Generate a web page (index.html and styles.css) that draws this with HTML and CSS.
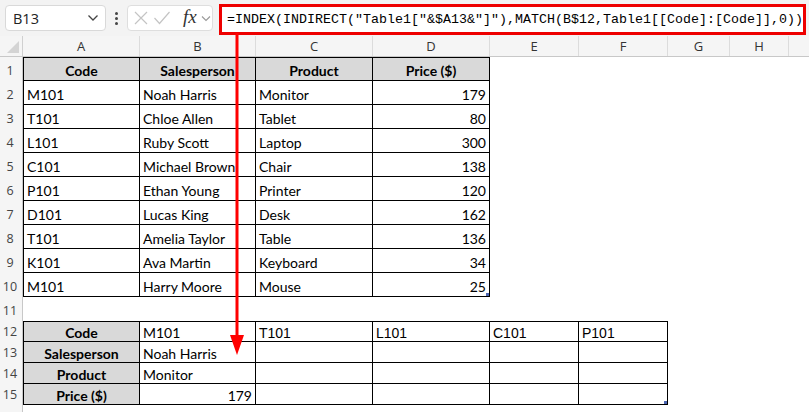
FILE: index.html
```html
<!DOCTYPE html>
<html>
<head>
<meta charset="utf-8">
<link rel="stylesheet" href="styles.css">
</head>
<body>
<div class="app">
  <div class="toolbar">
    <div class="namebox">
      <span class="nb-text">B13</span>
      <svg class="chev" width="12" height="8" viewBox="0 0 12 8"><path d="M1.5 1.5 L6 6 L10.5 1.5" fill="none" stroke="#444" stroke-width="1.3"/></svg>
    </div>
    <div class="dots"><span></span><span></span><span></span></div>
    <div class="fxbox">
      <svg width="16" height="16" viewBox="0 0 16 16"><path d="M2 2 L14 14 M14 2 L2 14" stroke="#c4c4c4" stroke-width="1.2" fill="none"/></svg>
      <svg width="18" height="16" viewBox="0 0 18 16"><path d="M1.5 8 L6.5 13.5 L16.5 2" stroke="#c4c4c4" stroke-width="1.2" fill="none"/></svg>
      <span class="fx">fx</span>
      <svg width="10" height="7" viewBox="0 0 10 7"><path d="M1 1.5 L5 5.5 L9 1.5" fill="none" stroke="#999" stroke-width="1.1"/></svg>
    </div>
    <div class="formula">=INDEX(INDIRECT("Table1["&amp;$A13&amp;"]"),MATCH(B$12,Table1[[Code]:[Code]],0))</div>
  </div>

  <div class="sheet">
    <div class="row colhead">
      <div class="corner"><span class="tri"></span></div>
      <div class="ch">A</div><div class="ch">B</div><div class="ch">C</div><div class="ch">D</div>
      <div class="ch">E</div><div class="ch">F</div><div class="ch">G</div><div class="ch">H</div><div class="ch last"></div>
    </div>

    <div class="row r24">
      <div class="rh">1</div>
      <div class="c b l t hd">Code</div><div class="c b t hd">Salesperson</div><div class="c b t hd">Product</div><div class="c b t hd">Price ($)</div>
    </div>
    <div class="row r24"><div class="rh">2</div><div class="c b l">M101</div><div class="c b">Noah Harris</div><div class="c b">Monitor</div><div class="c b num">179</div></div>
    <div class="row r24"><div class="rh">3</div><div class="c b l">T101</div><div class="c b">Chloe Allen</div><div class="c b">Tablet</div><div class="c b num">80</div></div>
    <div class="row r24"><div class="rh">4</div><div class="c b l">L101</div><div class="c b">Ruby Scott</div><div class="c b">Laptop</div><div class="c b num">300</div></div>
    <div class="row r24"><div class="rh">5</div><div class="c b l">C101</div><div class="c b">Michael Brown</div><div class="c b">Chair</div><div class="c b num">138</div></div>
    <div class="row r24"><div class="rh">6</div><div class="c b l">P101</div><div class="c b">Ethan Young</div><div class="c b">Printer</div><div class="c b num">120</div></div>
    <div class="row r24"><div class="rh">7</div><div class="c b l">D101</div><div class="c b">Lucas King</div><div class="c b">Desk</div><div class="c b num">162</div></div>
    <div class="row r24"><div class="rh">8</div><div class="c b l">T101</div><div class="c b">Amelia Taylor</div><div class="c b">Table</div><div class="c b num">136</div></div>
    <div class="row r24"><div class="rh">9</div><div class="c b l">K101</div><div class="c b">Ava Martin</div><div class="c b">Keyboard</div><div class="c b num">34</div></div>
    <div class="row r24"><div class="rh">10</div><div class="c b l">M101</div><div class="c b">Harry Moore</div><div class="c b">Mouse</div><div class="c b num handle">25</div></div>
    <div class="row r24"><div class="rh">11</div></div>

    <div class="row r21">
      <div class="rh">12</div>
      <div class="c b l t hd">Code</div><div class="c b t">M101</div><div class="c b t alt">T101</div><div class="c b t alt">L101</div><div class="c b t alt">C101</div><div class="c b t alt">P101</div>
    </div>
    <div class="row r21"><div class="rh">13</div><div class="c b l hd">Salesperson</div><div class="c b">Noah Harris</div><div class="c b"></div><div class="c b"></div><div class="c b"></div><div class="c b"></div></div>
    <div class="row r21"><div class="rh">14</div><div class="c b l hd">Product</div><div class="c b">Monitor</div><div class="c b"></div><div class="c b"></div><div class="c b"></div><div class="c b"></div></div>
    <div class="row r21"><div class="rh">15</div><div class="c b l hd">Price ($)</div><div class="c b num">179</div><div class="c b"></div><div class="c b"></div><div class="c b"></div><div class="c b handle"></div></div>
    <div class="row rest"><div class="rh"></div></div>
  </div>

  <svg class="arrow" width="14" height="325" viewBox="0 0 14 325">
    <rect x="5.5" y="0" width="3" height="306" fill="#f00"/>
    <polygon points="0,302 14,302 7,322" fill="#f00"/>
  </svg>
</div>
</body>
</html>
```

FILE: styles.css
```css
* { box-sizing: border-box; }
html, body { margin: 0; padding: 0; background: #fff; }
body { width: 809px; height: 412px; overflow: hidden; font-family: "Lato", "Open Sans", sans-serif; }
.app { position: relative; width: 809px; height: 412px; }

.toolbar {
  height: 36px;
  background: #f3f3f3;
  display: flex;
  align-items: center;
  padding-left: 5px;
}
.namebox {
  width: 101px; height: 26px;
  background: #fff;
  border: 1px solid #d9d9d9;
  border-radius: 4px;
  display: flex; align-items: center; justify-content: space-between;
  padding: 0 6px 0 7px;
  font-family: "Open Sans", sans-serif;
  font-size: 14.5px; color: #222;
}
.dots {
  width: 21px; height: 26px;
  display: flex; flex-direction: column; align-items: center; justify-content: center; gap: 2px;
}
.dots span { width: 3px; height: 3px; background: #444; border-radius: 50%; }
.fxbox {
  width: 86px; height: 26px;
  background: #fff;
  border: 1px solid #dedede;
  border-radius: 4px;
  display: flex; align-items: center; gap: 4px;
  padding-left: 5px;
}
.fx {
  font-family: "Liberation Serif", serif;
  font-style: italic;
  font-size: 19px;
  color: #333;
  margin-left: 8px;
  margin-top: -2px;
}
.formula {
  margin-left: 6px;
  margin-top: 2px;
  width: 587px; height: 31px;
  border: 3px solid #ee0000;
  background: #fff;
  font-family: "Liberation Mono", "DejaVu Sans Mono", monospace;
  font-size: 13.3px;
  color: #000;
  display: flex; align-items: center;
  padding-left: 5px;
  white-space: nowrap;
  letter-spacing: 0.02px;
}

.sheet { display: flex; flex-direction: column; }
.row {
  display: grid;
  grid-template-columns: 23px 117px 116px 117px 117px 89px 89px 62px 59px 20px;
}
.colhead { height: 21px; background: #f5f5f5; border-bottom: 1px solid #c8c8c8; }
.corner { position: relative; border-right: 1px solid #d0d0d0; }
.tri {
  position: absolute; right: 3px; bottom: 3px;
  width: 0; height: 0;
  border-left: 12px solid transparent;
  border-bottom: 12px solid #d4d4d4;
}
.ch {
  display: flex; align-items: center; justify-content: center;
  font-family: "Open Sans", sans-serif; font-size: 13px; color: #333;
  border-right: 1px solid #dcdcdc;
}
.ch.last { border-right: none; }

.r24 { height: 24px; }
.r21 { height: 21px; }
.rest { height: 7px; }
.rh {
  background: #f5f5f5;
  border-right: 1px solid #c8c8c8;
  display: flex; align-items: flex-end; justify-content: center;
  padding-bottom: 2px; padding-right: 2px;
  font-family: "Open Sans", sans-serif; font-size: 12.5px; color: #444;
}
.c {
  display: flex; align-items: flex-end;
  padding: 0 3px 1px 3px;
  font-size: 14px; color: #000;
  white-space: nowrap; overflow: hidden;
  position: relative;
}
.r21 .c { padding-bottom: 0; }
.b { border-right: 1px solid #000; border-bottom: 1px solid #000; }
.l { border-left: 1px solid #000; }
.t { border-top: 1px solid #000; }
.hd { background: #d9d9d9; font-weight: 700; justify-content: center; }
.num { justify-content: flex-end; }
.alt { font-family: "Liberation Sans", sans-serif; font-size: 14px; }
.handle::after {
  content: ""; position: absolute; right: -1px; bottom: -1px;
  width: 4px; height: 4px; background: #4a64b0;
}

.arrow { position: absolute; left: 230px; top: 33px; }
```
